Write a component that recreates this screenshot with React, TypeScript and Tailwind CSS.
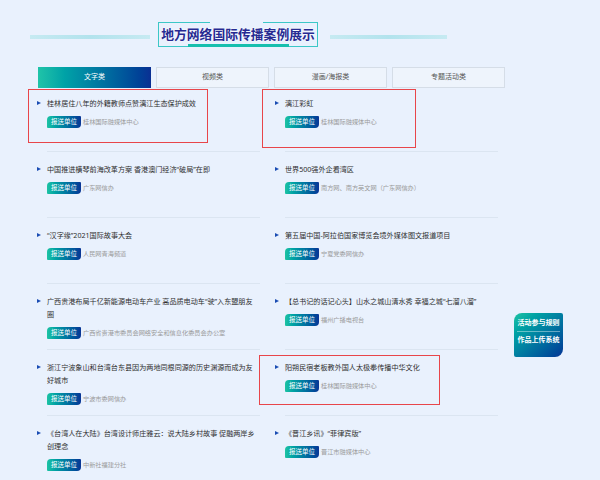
const items = [
  { title: "桂林居住八年的外籍教师点赞漓江生态保护成效", source: "桂林国际融媒体中心" },
  { title: "漓江彩虹", source: "桂林国际融媒体中心" },
  { title: "中国推进横琴前海改革方案 香港澳门经济“破局”在即", source: "广东网信办" },
  { title: "世界500强外企看湾区", source: "南方网、南方英文网（广东网信办）" },
  { title: "“汉字缘”2021国际故事大会", source: "人民网青海频道" },
  { title: "第五届中国-阿拉伯国家博览会境外媒体图文报道项目", source: "宁夏党委网信办" },
  {
    title: "广西贵港布局千亿新能源电动车产业 高品质电动车“驶”入东盟朋友圈",
    source: "广西省贵港市委员会网络安全和信息化委员会办公室",
  },
  { title: "【总书记的话记心头】山水之城山清水秀 幸福之城“七溜八溜”", source: "福州广播电视台" },
  { title: "浙江宁波象山和台湾台东县因为两地同根同源的历史渊源而成为友好城市", source: "宁波市委网信办" },
  { title: "阳朔民宿老板教外国人太极拳传播中华文化", source: "桂林国际融媒体中心" },
  { title: "《台湾人在大陆》台湾设计师庄雅云：说大陆乡村故事 促融两岸乡创理念", source: "中新社福建分社" },
  { title: "《晋江乡讯》“菲律宾版”", source: "晋江市融媒体中心" },
];

const tabs = ["文字类", "视频类", "漫画/海报类", "专题活动类"];

const Item = ({ title, source, first }: { title: string; source: string; first: boolean }) => (
  <div className="flex h-[66px]">
    <div className="w-[10px] shrink-0 pt-[16px]">
      <div className="w-0 h-0 border-y-[2.5px] border-y-transparent border-l-[4px] border-l-[#1b4db3]" />
    </div>
    <div className={`flex-1 pt-[11px] border-t ${first ? "border-transparent" : "border-[#dbe5f1]"}`}>
      <p className="pr-[4px] text-[7.1px] leading-[13px] text-[#2e2e2e]">{title}</p>
      <div className="flex items-center mt-[6px]">
        <span className="flex items-center justify-center w-[34px] h-[12px] shrink-0 text-[6.5px] text-white bg-linear-to-r from-[#1dc3a3] to-[#0b3596] rounded-tl-[4px] rounded-br-[4px] rounded-tr-[1px] rounded-bl-[1px]">
          报送单位
        </span>
        <span className="ml-[2px] text-[6.2px] text-[#9a9a9a] whitespace-nowrap">{source}</span>
      </div>
    </div>
  </div>
);

export default function App() {
  return (
    <div className="relative w-[600px] h-[480px] overflow-hidden bg-[#e9f1fd] font-['Noto_Sans','Noto_Sans_CJK_SC',sans-serif]">
      {/* heading */}
      <div className="flex items-start pt-[22px] pl-[30px]">
        <div className="w-[120px] h-[4px] mt-[13px] bg-linear-to-r from-[#c6eaf2] via-[#b2e3ed] to-[#c6eaf2]" />
        <div className="relative ml-[8px] w-[160px] h-[25px] border-x border-b border-[#3cc7c7] flex items-center justify-center">
          <div className="absolute top-0 left-0 w-[51px] h-px bg-[#3cc7c7]" />
          <div className="absolute top-0 right-0 w-[54px] h-px bg-[#3cc7c7]" />
          <div className="absolute bottom-[-1px] left-[29px] w-[101px] h-[3px] bg-[#17bfae]" />
          <span className="text-[12.8px] font-bold leading-none text-[#262a92] [text-shadow:0_0_2px_#fff,0_0_1px_#fff]">
            地方网络国际传播案例展示
          </span>
        </div>
        <div className="w-[117px] h-[4px] mt-[13px] ml-[12px] bg-linear-to-r from-[#c6eaf2] via-[#b2e3ed] to-[#c6eaf2]" />
      </div>

      {/* tabs */}
      <div className="flex gap-[5px] pl-[38px] mt-[20px]">
        {tabs.map((t, i) => (
          <div
            key={t}
            className={
              i === 0
                ? "w-[113px] h-[21px] flex items-center justify-center text-[7px] text-white bg-linear-to-r from-[#1fc4a8] to-[#0a2f93]"
                : "w-[113px] h-[21px] flex items-center justify-center text-[7px] text-[#555] bg-[#eef4fc] border border-[#d5dde7]"
            }
          >
            {t}
          </div>
        ))}
      </div>

      {/* list */}
      <div className="grid grid-cols-[223px_223px] gap-x-[15px] pl-[37px] mt-[-3px]">
        {items.map((it, i) => (
          <Item key={i} title={it.title} source={it.source} first={i < 2} />
        ))}
      </div>

      {/* floating side button */}
      <div className="absolute left-[514px] top-[313px] w-[49px] h-[44px] px-[3px] pt-[3px] bg-linear-to-br from-[#1dc3a3] to-[#0b3596] rounded-tl-[8px] rounded-br-[8px] rounded-tr-[2px] rounded-bl-[2px] text-white font-bold text-[7px]">
        <div className="h-[16px] flex items-center justify-center border-b border-white/40">活动参与规则</div>
        <div className="h-[17px] flex items-center justify-center">作品上传系统</div>
      </div>

      {/* annotation boxes */}
      <div className="absolute left-[28px] top-[89px] w-[180px] h-[54px] border-[1.5px] border-[#e8464a]" />
      <div className="absolute left-[262px] top-[89px] w-[154px] h-[59px] border-[1.5px] border-[#e8464a]" />
      <div className="absolute left-[259px] top-[355px] w-[181px] h-[50px] border-[1.5px] border-[#e8464a]" />
    </div>
  );
}
